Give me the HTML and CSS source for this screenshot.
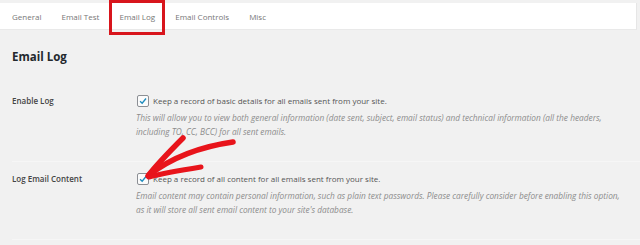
FILE: index.html
```html
<!DOCTYPE html>
<html>
<head>
<meta charset="utf-8">
<link rel="stylesheet" href="styles.css">
</head>
<body>
<div class="page">
  <nav class="tabs">
    <span class="tab">General</span>
    <span class="tab">Email Test</span>
    <span class="tab tab-active">Email Log</span>
    <span class="tab">Email Controls</span>
    <span class="tab">Misc</span>
  </nav>
  <main class="content">
    <h2 class="title">Email Log</h2>
    <div class="row">
      <div class="label">Enable Log</div>
      <div class="field">
        <label class="check"><span class="box"><svg viewBox="0 0 12 12" width="10" height="10"><path d="M2.5 6.2 L5 8.6 L9.6 3" fill="none" stroke="#1e8cbe" stroke-width="1.6"/></svg></span>Keep a record of basic details for all emails sent from your site.</label>
        <p class="desc">This will allow you to view both general information (date sent, subject, email status) and technical information (all the headers,<br>including TO, CC, BCC) for all sent emails.</p>
      </div>
    </div>
    <div class="row">
      <div class="label">Log Email Content</div>
      <div class="field">
        <label class="check"><span class="box"><svg viewBox="0 0 12 12" width="10" height="10"><path d="M2.5 6.2 L5 8.6 L9.6 3" fill="none" stroke="#1e8cbe" stroke-width="1.6"/></svg></span>Keep a record of all content for all emails sent from your site.</label>
        <p class="desc">Email content may contain personal information, such as plain text passwords. Please carefully consider before enabling this option,<br>as it will store all sent email content to your site's database.</p>
      </div>
    </div>
  </main>
  <div class="highlight"></div>
  <svg class="arrow" width="640" height="245" viewBox="0 0 640 245">
    <path d="M233 139 C 205 143, 175 152, 149 172" fill="none" stroke="#e8141b" stroke-width="5.5" stroke-linecap="round"/>
    <path d="M183 135 C 170 148, 158 160, 148 173" fill="none" stroke="#e8141b" stroke-width="5.5" stroke-linecap="round"/>
    <path d="M201 164 C 182 167, 164 170, 149 174" fill="none" stroke="#e8141b" stroke-width="5" stroke-linecap="round"/>
  </svg>
</div>
</body>
</html>
```
FILE: styles.css
```css
html, body {
  margin: 0;
  padding: 0;
}
body {
  background: #f1f1f1;
  font-family: "Open Sans", "Noto Sans", sans-serif;
  width: 640px;
  height: 245px;
  overflow: hidden;
}
.page {
  position: relative;
  width: 640px;
  height: 245px;
}
.tabs {
  margin: 3px 3px 0 0;
  height: 27px;
  background: #fff;
  border-right: 1px solid #e6e6e6;
  border-bottom: 1px solid #e9e9e9;
  display: flex;
  align-items: center;
  gap: 20px;
  padding-left: 12px;
  box-sizing: border-box;
}
.tab {
  font-size: 8px;
  color: #777;
}
.content {
  padding: 0 0 0 12px;
}
.title {
  margin: 0;
  padding-top: 19px;
  font-size: 11.5px;
  font-weight: 700;
  color: #23282d;
  line-height: 16px;
  height: 35px;
  box-sizing: content-box;
}
.row {
  display: flex;
  height: 78px;
  padding-top: 10px;
  border-bottom: 1px solid #f6f6f6;
  box-sizing: border-box;
}
.label {
  width: 124px;
  font-size: 8px;
  font-weight: 600;
  color: #444;
  line-height: 14px;
}
.field {
  flex: 1;
}
.check {
  display: flex;
  align-items: center;
  font-size: 8px;
  color: #555;
  line-height: 14px;
}
.box {
  width: 10px;
  height: 10px;
  border: 1px solid #8c8f94;
  border-radius: 2px;
  background: #fbfbfb;
  margin: 0 4px 0 1px;
  display: flex;
  align-items: center;
  justify-content: center;
}
.desc {
  margin: 3px 0 0;
  font-size: 8.3px;
  font-style: italic;
  color: #8c8c8c;
  line-height: 14px;
  white-space: nowrap;
}
.highlight {
  position: absolute;
  left: 109px;
  top: -3px;
  width: 56px;
  height: 35px;
  border: 3px solid #d8151c;
  box-sizing: border-box;
}
.arrow {
  position: absolute;
  left: 0;
  top: 0;
  pointer-events: none;
}
```
